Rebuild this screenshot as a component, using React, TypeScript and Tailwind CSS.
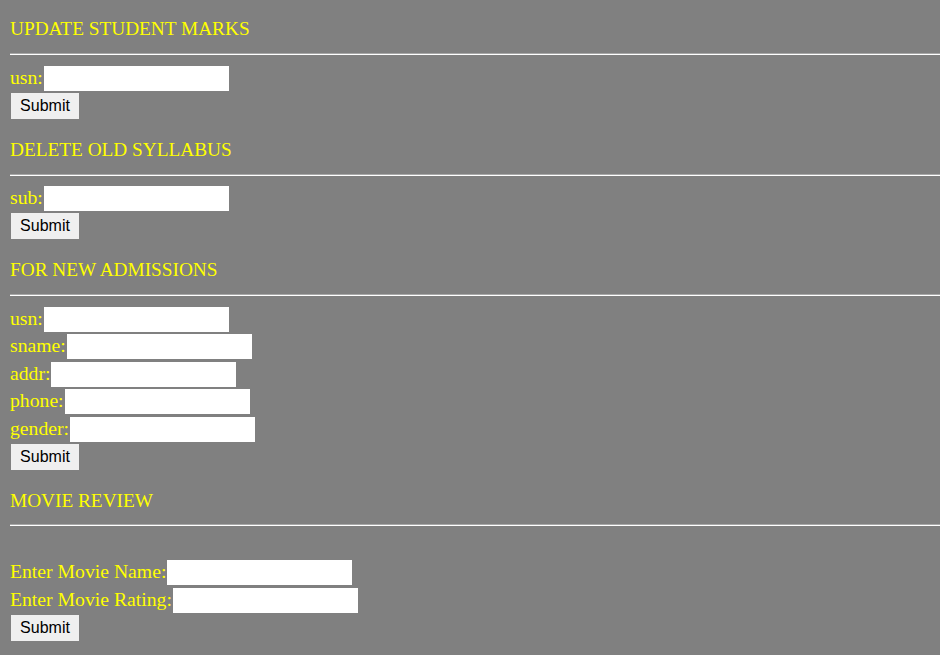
const serif = "font-['Liberation_Serif','Times_New_Roman',serif]";

function Heading({ children, className = "" }: { children: string; className?: string }) {
  return (
    <div className={className}>
      <h2 className={`${serif} text-[19.3px] leading-[22px] text-[#ffff00] font-normal`}>{children}</h2>
    </div>
  );
}

function Rule({ className = "" }: { className?: string }) {
  return <div className={`h-[2px] border-t border-t-[#a8a8a8] border-b border-b-white ${className}`} />;
}

function Field({ label, className = "" }: { label: string; className?: string }) {
  return (
    <div className={`flex items-start h-[25px] ${className}`}>
      <span className={`${serif} text-[19.7px] leading-[22px] text-[#ffff00]`}>{label}</span>
      <input type="text" className="ml-px w-[185px] h-[25px] bg-white outline-none border-0" />
    </div>
  );
}

function SubmitButton({ className = "" }: { className?: string }) {
  return (
    <button
      type="button"
      className={`ml-px w-[68px] h-[26px] bg-[#efefef] text-black text-[16px] leading-none font-['Liberation_Sans',Arial,sans-serif] ${className}`}
    >
      Submit
    </button>
  );
}

export default function App() {
  return (
    <div className="min-h-screen bg-[#808080] pl-[10px] overflow-hidden">
      {/* update marks */}
      <Heading className="pt-[18px]">UPDATE STUDENT MARKS</Heading>
      <Rule className="mt-[13px]" />
      <Field label="usn:" className="mt-[11px]" />
      <div className="mt-[2px]">
        <SubmitButton />
      </div>

      {/* syllabus */}
      <Heading className="mt-[20px]">DELETE OLD SYLLABUS</Heading>
      <Rule className="mt-[13px]" />
      <Field label="sub:" className="mt-[10px]" />
      <div className="mt-[2px]">
        <SubmitButton />
      </div>

      {/* admissions */}
      <Heading className="mt-[20px]">FOR NEW ADMISSIONS</Heading>
      <Rule className="mt-[13px]" />
      <Field label="usn:" className="mt-[11px]" />
      <Field label="sname:" className="mt-[2px]" />
      <Field label="addr:" className="mt-[3px]" />
      <Field label="phone:" className="mt-[2px]" />
      <Field label="gender:" className="mt-[3px]" />
      <div className="mt-[2px]">
        <SubmitButton />
      </div>

      {/* movie review */}
      <Heading className="mt-[20px]">MOVIE REVIEW</Heading>
      <Rule className="mt-[12px]" />
      <Field label="Enter Movie Name:" className="mt-[34px]" />
      <Field label="Enter Movie Rating:" className="mt-[3px]" />
      <div className="mt-[2px]">
        <SubmitButton />
      </div>
      <div className="h-[14px]" />
    </div>
  );
}
